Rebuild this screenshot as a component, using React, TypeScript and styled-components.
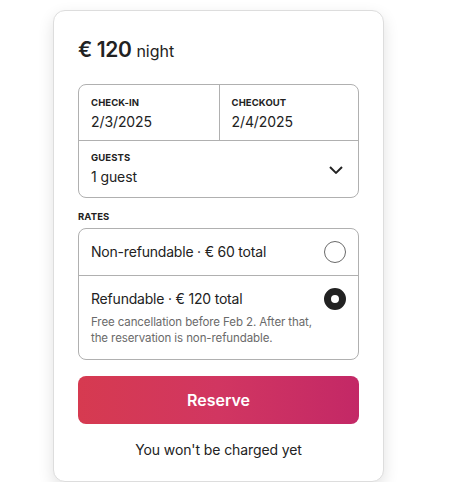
import React, { useState } from 'react';
import styled, { createGlobalStyle } from 'styled-components';

const GlobalStyle = createGlobalStyle`
  body {
    margin: 0;
    background: #ffffff;
    font-family: Inter, "Noto Sans", sans-serif;
    color: #222222;
  }
`;

const Page = styled.div`
  padding: 10px 0 0 53px;
`;

const Card = styled.div`
  width: 331px;
  box-sizing: border-box;
  padding: 24px 24px 23px 24px;
  border: 1px solid #dddddd;
  border-radius: 12px;
  background: #fff;
  box-shadow: 0 6px 16px rgba(0, 0, 0, 0.12);
`;

const Price = styled.div`
  display: flex;
  align-items: baseline;
  gap: 5px;
  margin: 2px 0 22px;
`;

const Amount = styled.span`
  font-size: 21px;
  font-weight: 600;
  letter-spacing: -0.4px;
`;

const Unit = styled.span`
  font-size: 16px;
  color: #222;
`;

const Box = styled.div`
  border: 1px solid #b0b0b0;
  border-radius: 8px;
  overflow: hidden;
`;

const DateRow = styled.div`
  display: grid;
  grid-template-columns: 1fr 1fr;
  border-bottom: 1px solid #b0b0b0;
`;

const Field = styled.div<{ $divider?: boolean }>`
  padding: 12px 12px 9px;
  border-left: ${(p) => (p.$divider ? '1px solid #b0b0b0' : 'none')};
`;

const GuestField = styled.div`
  display: flex;
  align-items: center;
  justify-content: space-between;
  padding: 11px 14px 11px 12px;
`;

const Label = styled.div`
  font-size: 9.5px;
  line-height: 12px;
  font-weight: 700;
  letter-spacing: 0.1px;
  text-transform: uppercase;
  color: #222;
`;

const Value = styled.div`
  font-size: 14px;
  line-height: 18px;
  margin-top: 4px;
  color: #222;
  letter-spacing: -0.1px;
`;

const SectionLabel = styled(Label)`
  margin: 13px 0 5px;
`;

const RateRow = styled.label<{ $last?: boolean }>`
  display: flex;
  align-items: flex-start;
  justify-content: space-between;
  padding: 13px 12px ${(p) => (p.$last ? '13px' : '12px')} 12px;
  border-bottom: ${(p) => (p.$last ? 'none' : '1px solid #b0b0b0')};
  cursor: pointer;
`;

const RateText = styled.div`
  display: flex;
  flex-direction: column;
`;

const RateTitle = styled.div`
  font-size: 14px;
  line-height: 20px;
  color: #222;
  letter-spacing: -0.2px;
`;

const RateNote = styled.div`
  font-size: 11.5px;
  line-height: 16px;
  color: #6a6a6a;
  margin-top: 5px;
  letter-spacing: -0.1px;
`;

const Radio = styled.span<{ $checked: boolean }>`
  flex: none;
  width: 22px;
  height: 22px;
  box-sizing: border-box;
  border-radius: 50%;
  border: ${(p) => (p.$checked ? '7px solid #222' : '1px solid #6a6a6a')};
  background: #fff;
  margin-top: -1px;
`;

const ReserveButton = styled.button`
  display: block;
  width: 100%;
  height: 48px;
  margin-top: 16px;
  border: none;
  border-radius: 8px;
  background: linear-gradient(to right, #d63a50 0%, #d13661 50%, #c32866 100%);
  color: #fff;
  font-family: inherit;
  font-size: 16px;
  font-weight: 600;
  cursor: pointer;
`;

const Note = styled.div`
  text-align: center;
  font-size: 14px;
  color: #222;
  margin-top: 17px;
  letter-spacing: -0.1px;
`;

const Chevron = () => (
  <svg width="16" height="16" viewBox="0 0 32 32" fill="none" stroke="#222" strokeWidth="4">
    <path d="M28 12 16.7 23.3a1 1 0 0 1-1.4 0L4 12" />
  </svg>
);

export default function App() {
  const [rate, setRate] = useState('refundable');

  return (
    <Page>
      <GlobalStyle />
      <Card>
        <Price>
          <Amount>€ 120</Amount>
          <Unit>night</Unit>
        </Price>

        <Box>
          <DateRow>
            <Field>
              <Label>Check-in</Label>
              <Value>2/3/2025</Value>
            </Field>
            <Field $divider>
              <Label>Checkout</Label>
              <Value>2/4/2025</Value>
            </Field>
          </DateRow>
          <GuestField>
            <div>
              <Label>Guests</Label>
              <Value>1 guest</Value>
            </div>
            <Chevron />
          </GuestField>
        </Box>

        <SectionLabel>Rates</SectionLabel>
        <Box>
          <RateRow onClick={() => setRate('nonrefundable')}>
            <RateText>
              <RateTitle>Non-refundable · € 60 total</RateTitle>
            </RateText>
            <Radio $checked={rate === 'nonrefundable'} />
          </RateRow>
          <RateRow $last onClick={() => setRate('refundable')}>
            <RateText>
              <RateTitle>Refundable · € 120 total</RateTitle>
              <RateNote>
                Free cancellation before Feb 2. After that,
                <br />
                the reservation is non-refundable.
              </RateNote>
            </RateText>
            <Radio $checked={rate === 'refundable'} />
          </RateRow>
        </Box>

        <ReserveButton>Reserve</ReserveButton>
        <Note>You won't be charged yet</Note>
      </Card>
    </Page>
  );
}
